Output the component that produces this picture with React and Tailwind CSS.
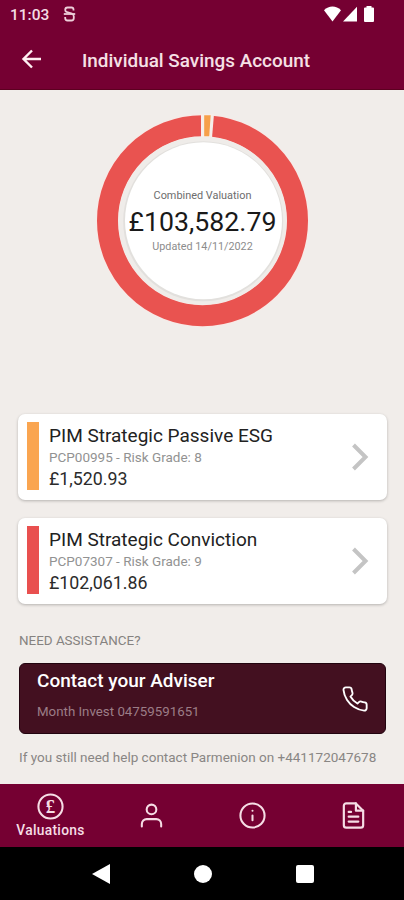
import React from "react";

const accounts = [
  { name: "PIM Strategic Passive ESG", detail: "PCP00995 - Risk Grade: 8", value: "£1,520.93", bar: "bg-[#faa550]" },
  { name: "PIM Strategic Conviction", detail: "PCP07307 - Risk Grade: 9", value: "£102,061.86", bar: "bg-[#e9504f]" },
];

function Line({ size = 28, width = 1.6, children }) {
  return (
    <svg width={size} height={size} viewBox="0 0 24 24" fill="none" stroke="currentColor" strokeWidth={width} strokeLinecap="round" strokeLinejoin="round" className="block shrink-0">
      {children}
    </svg>
  );
}

function StatusBar() {
  return (
    <div className="flex h-[30px] items-center pl-[10px] pr-[30px]">
      <span className="w-[40px] whitespace-nowrap pt-px text-[15.500px] font-medium leading-none text-[#f3dde4]">11:03</span>
      <svg width="13" height="16" viewBox="0 0 13 16" fill="none" stroke="#eecfda" strokeWidth="1.8" className="-mt-[2px] ml-[13px]">
        <path d="M10.500 4.500V3.5Q10.500 1.5 8.500 1.500H4.500Q2.200 1.500 2.200 4Q2.200 5.700 4 6.200L9 7.700Q10.800 8.500 10.800 10.500V12Q10.800 14.500 8.500 14.500H4.500Q2.200 14.500 2.200 12V11" />
        <path d="M.8 8H12.2" />
      </svg>
      <div className="-mt-[2px] ml-auto flex items-center gap-[2px] text-white">
        <svg width="17" height="16" viewBox="0 0 18 16" preserveAspectRatio="none" fill="currentColor">
          <path d="M9 15.500 0 4.200Q4 .6 9 .6T18 4.200Z" />
        </svg>
        <svg width="14" height="16" viewBox="0 0 14 16" fill="currentColor">
          <path d="M14 .8V15.500H0Z" />
        </svg>
        <svg width="10" height="16" viewBox="0 0 10 16" fill="currentColor" className="ml-[5px]">
          <path d="M2.500 0H7.500V1.500H9Q10 1.500 10 2.500V15Q10 16 9 16H1Q0 16 0 15V2.500Q0 1.500 1 1.500H2.500Z" />
        </svg>
      </div>
    </div>
  );
}

function Donut() {
  return (
    <div className="mx-auto mt-[24px] grid h-[214px] w-[214px] place-items-center">
      <svg width="214" height="214" viewBox="1 0 214 214" className="col-start-1 row-start-1">
        <circle cx="107.500" cy="106.700" r="95" fill="none" stroke="#f8e9e6" strokeWidth="23" />
        <circle cx="107.500" cy="106.700" r="95" fill="none" stroke="#e95350" strokeWidth="21" />
        <path d="M106 0H119L117 24H106Z" fill="#f6eeea" />
        <path d="M109.200 1.200H115.700L114.200 22.200H109.200Z" fill="#f6a04a" />
        <circle cx="107.500" cy="106.700" r="84" fill="#efece9" />
        <circle cx="108.200" cy="107.300" r="80" fill="#e2e0dd" />
        <circle cx="108.500" cy="106.700" r="78.500" fill="#fff" />
      </svg>
      <div className="col-start-1 row-start-1 flex flex-col items-center whitespace-nowrap pt-px">
        <span className="text-[10.900px] leading-[14px] text-[#6d6d6d]">Combined Valuation</span>
        <span className="mt-[2px] text-[26.700px] leading-[34px] text-[#191919]">£103,582.79</span>
        <span className="mt-px text-[10.800px] leading-[14px] text-[#8c8c8c]">Updated 14/11/2022</span>
      </div>
    </div>
  );
}

function AccountCard({ name, detail, value, bar }) {
  return (
    <div className="flex h-[86px] items-center rounded-[7px] bg-white pl-[9px] pr-[18px] shadow-[0_1px_3px_rgba(0,0,0,0.250)]">
      <div className={"-mt-[2px] h-[68px] w-[12px] " + bar} />
      <div className="-mt-px ml-[10px] flex flex-col whitespace-nowrap">
        <span className="text-[19px] leading-[24px] text-[#222]">{name}</span>
        <span className="text-[13.500px] leading-[19px] text-[#929292]">{detail}</span>
        <span className="text-[17.800px] leading-[23px] text-[#2b2b2b]">{value}</span>
      </div>
      <svg width="18" height="28" viewBox="0 0 18 28" fill="none" stroke="#c4c4c4" strokeWidth="4" className="-mt-px ml-auto">
        <path d="M2.500 2 14.500 14 2.500 26" />
      </svg>
    </div>
  );
}

function BottomNav() {
  return (
    <nav className="grid h-[63px] grid-cols-4 place-items-center bg-[#750032] text-[#f6dde5]">
      <div className="flex flex-col items-center">
        <div className="grid place-items-center">
          <div className="col-start-1 row-start-1">
            <Line size={29} width={1.7}><circle cx="12" cy="12" r="10" /></Line>
          </div>
          <span className="col-start-1 row-start-1 font-['Liberation_Serif',serif] text-[19px] font-bold leading-none">£</span>
        </div>
        <span className="whitespace-nowrap text-[13.800px] font-medium leading-[19px] tracking-[0.300px]">Valuations</span>
      </div>
      <Line size={29} width={1.7}><path d="M20 21v-2a4 4 0 0 0-4-4H8a4 4 0 0 0-4 4v2" /><circle cx="12" cy="7" r="4" /></Line>
      <Line size={29} width={1.7}><circle cx="12" cy="12" r="10" /><path d="M12 16v-4M12 8h.01" /></Line>
      <Line size={29} width={1.8}>
        <path d="M14 2H6a2 2 0 0 0-2 2v16a2 2 0 0 0 2 2h12a2 2 0 0 0 2-2V8z" />
        <path d="M14 2v6h6M16 13H8M16 17H8M10 9H8" />
      </Line>
    </nav>
  );
}

export default function App() {
  return (
    <div className="flex h-[900px] w-[404px] flex-col overflow-hidden bg-[#f1edea] font-['Roboto',sans-serif]">
      <header className="h-[90px] border-b border-[#5c0020] bg-[#750032]">
        <StatusBar />
        <div className="flex h-[60px] items-center pl-[21px]">
          <svg width="21" height="20" viewBox="0 0 21 20" fill="none" stroke="#fff0f3" strokeWidth="2.400" className="-mt-[3px]">
            <path d="M20 10H3M11 1.500 2.500 10 11 18.500" />
          </svg>
          <h1 className="ml-[40px] whitespace-nowrap pt-px text-[18.900px] font-medium leading-[26px] text-[#f6e0e6]">Individual Savings Account</h1>
        </div>
      </header>
      <main className="h-[694px] pl-[18px] pr-[17px]">
        <Donut />
        <div className="mt-[86px] flex flex-col gap-[18px]">
          {accounts.map((a) => <AccountCard key={a.name} {...a} />)}
        </div>
        <p className="mt-[27px] pl-px text-[13.400px] leading-[20px] text-[#858280]">NEED ASSISTANCE?</p>
        <div className="ml-px mt-[12px] flex h-[71px] w-[367px] items-center justify-between rounded-[6px] border border-[#22040f] bg-[#431020] pl-[17px] pr-[16px]">
          <div className="flex flex-col whitespace-nowrap pb-[7px]">
            <span className="text-[19px] font-medium leading-[24px] text-white">Contact your Adviser</span>
            <span className="mt-[10px] text-[13.300px] leading-[18px] text-[#9c7d87]">Month Invest 04759591651</span>
          </div>
          <span className="text-white">
            <Line size={28} width={1.6}>
              <path d="M22 16.920v3a2 2 0 0 1-2.180 2 19.790 19.790 0 0 1-8.630-3.070 19.500 19.500 0 0 1-6-6 19.790 19.790 0 0 1-3.070-8.670A2 2 0 0 1 4.110 2h3a2 2 0 0 1 2 1.720 12.840 12.840 0 0 0 .7 2.810 2 2 0 0 1-.45 2.110L8.090 9.910a16 16 0 0 0 6 6l1.270-1.270a2 2 0 0 1 2.110-.45 12.840 12.840 0 0 0 2.810.7A2 2 0 0 1 22 16.920z" />
            </Line>
          </span>
        </div>
        <p className="mt-[13px] whitespace-nowrap pl-px text-[13.500px] leading-[20px] text-[#898684]">If you still need help contact Parmenion on +441172047678</p>
      </main>
      <BottomNav />
      <div className="grid h-[53px] grid-cols-[51px_99px_105px_99px_50px] place-items-center bg-black text-white">
        <svg width="18" height="20" viewBox="0 0 18 20" fill="currentColor" className="col-start-2"><path d="M18 0V20L0 10Z" /></svg>
        <div className="h-[18px] w-[18px] rounded-full bg-white" />
        <div className="h-[18px] w-[18px] rounded-[2px] bg-white" />
      </div>
    </div>
  );
}
